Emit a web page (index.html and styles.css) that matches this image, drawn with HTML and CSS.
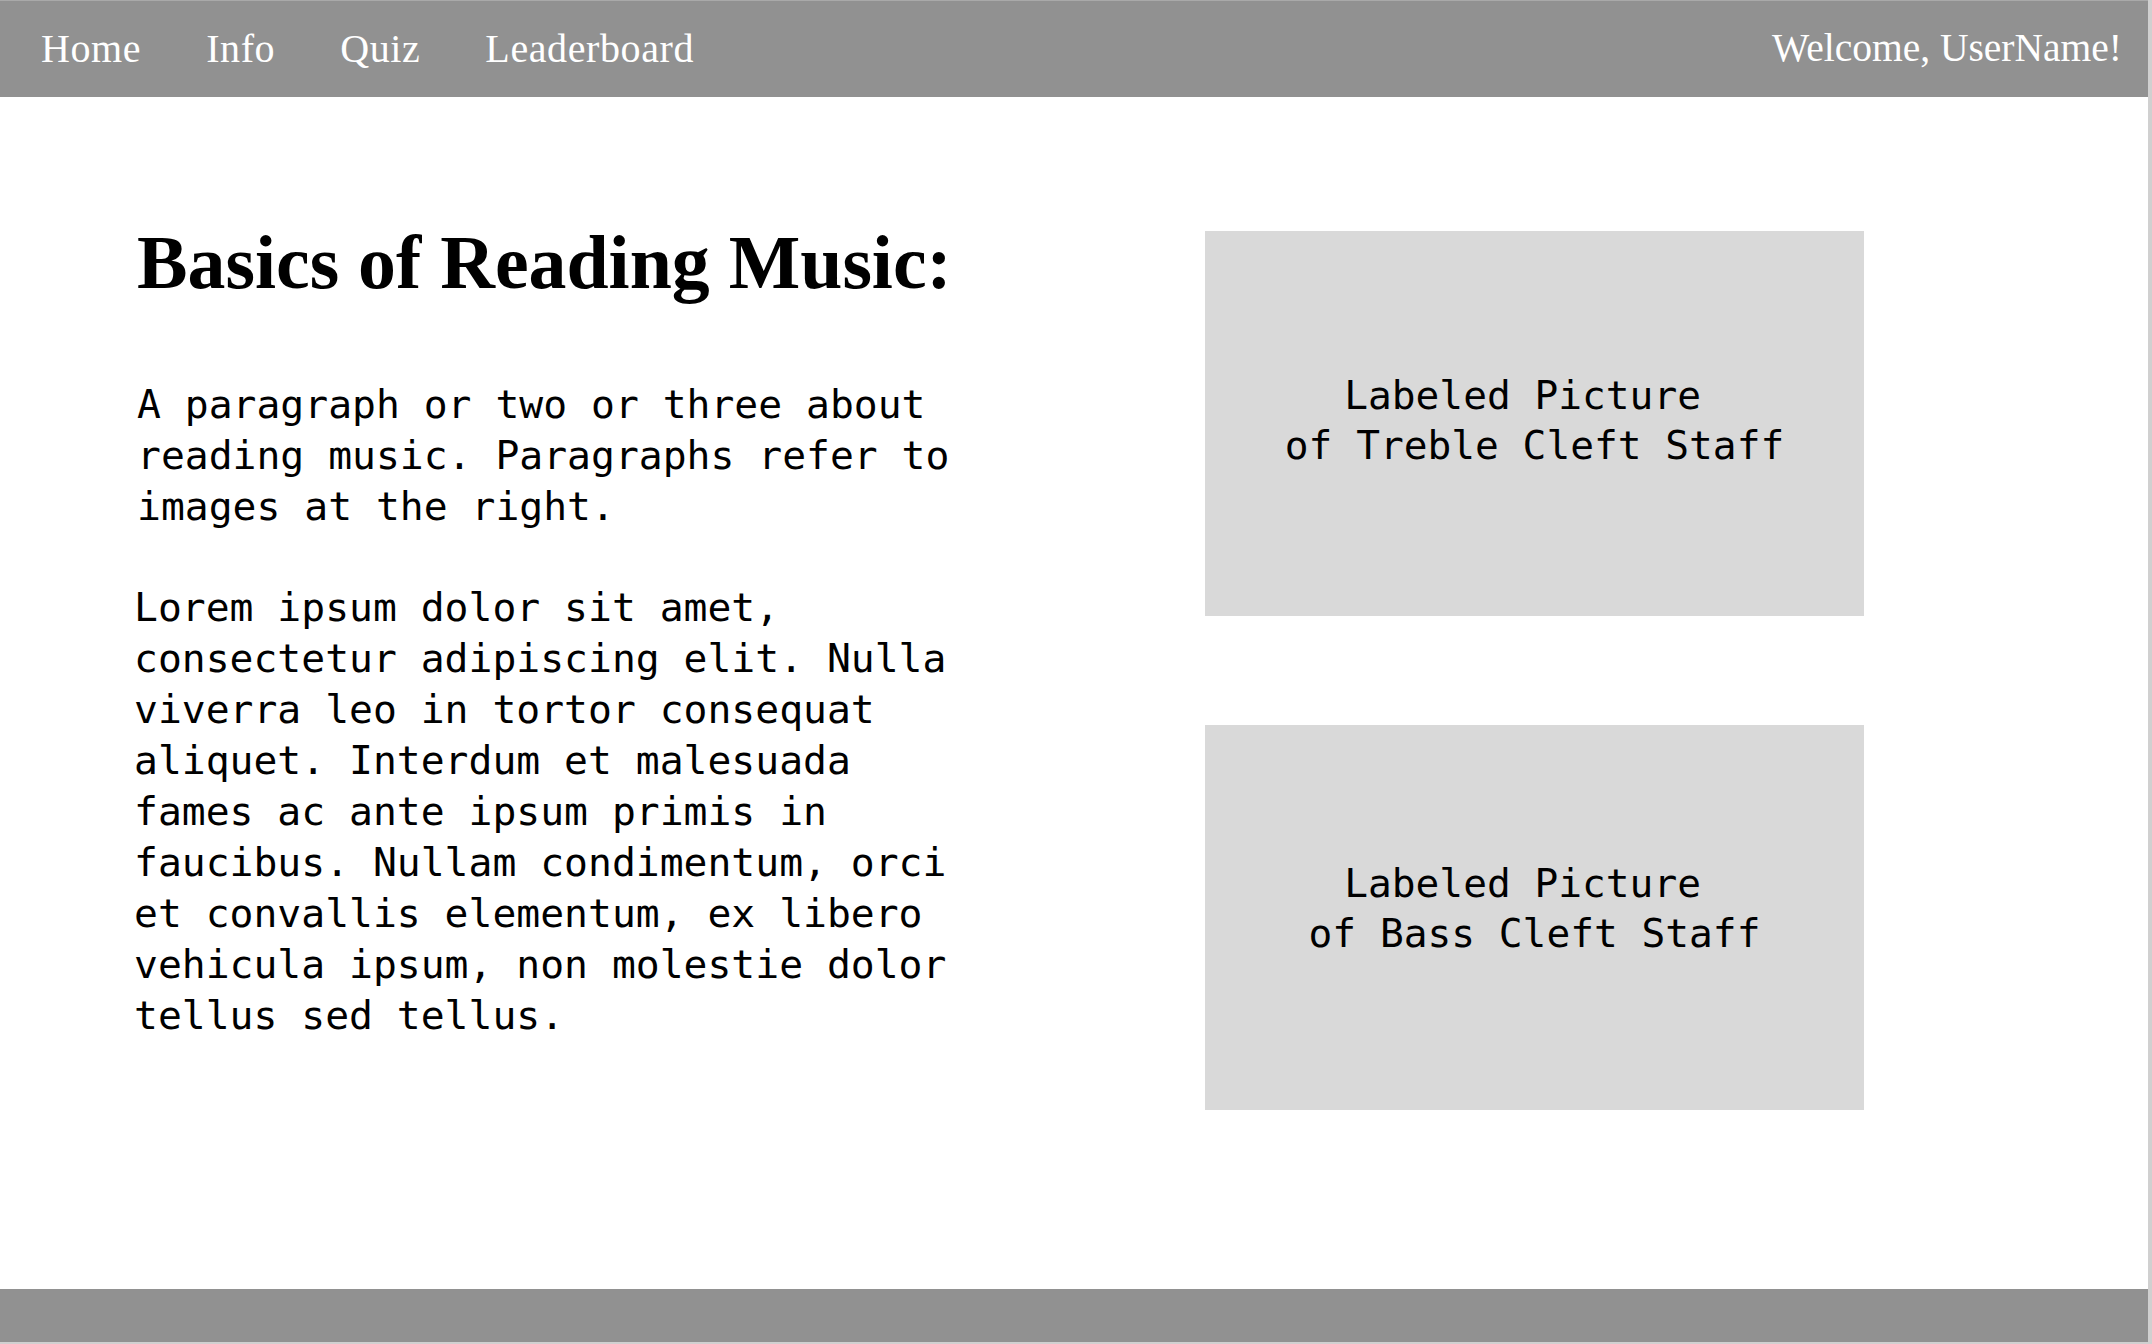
FILE: index.html
```html
<!DOCTYPE html>
<html lang="en">
<head>
<meta charset="utf-8">
<title>Basics of Reading Music</title>
<link rel="stylesheet" href="styles.css">
</head>
<body>
<div class="page">
  <nav class="topnav">
    <div class="nav-links">
      <a class="nav-link" href="#">Home</a>
      <a class="nav-link" href="#">Info</a>
      <a class="nav-link" href="#">Quiz</a>
      <a class="nav-link" href="#">Leaderboard</a>
    </div>
    <div class="welcome">Welcome, UserName!</div>
  </nav>
  <main class="content">
    <section class="text-col">
      <h1 class="title">Basics of Reading Music:</h1>
      <p class="para">A paragraph or two or three about reading music. Paragraphs refer to images at the right.</p>
      <p class="para para-lorem">Lorem ipsum dolor sit amet, consectetur adipiscing elit. Nulla viverra leo in tortor consequat aliquet. Interdum et malesuada fames ac ante ipsum primis in faucibus. Nullam condimentum, orci et convallis elementum, ex libero vehicula ipsum, non molestie dolor tellus sed tellus.</p>
    </section>
    <section class="pic-col">
      <div class="pic pic-treble"><span class="pic-label">Labeled Picture 
of Treble Cleft Staff</span></div>
      <div class="pic pic-bass"><span class="pic-label">Labeled Picture 
of Bass Cleft Staff</span></div>
    </section>
  </main>
  <footer class="footer"></footer>
</div>
</body>
</html>
```

FILE: styles.css
```css
html, body {
  margin: 0;
  padding: 0;
}
body {
  background: #d0d0d0;
  height: 1344px;
  overflow: hidden;
}
.page {
  box-sizing: border-box;
  margin: 0 4px 2px 0;
  height: 1342px;
  background: #ffffff;
  display: flex;
  flex-direction: column;
}
.topnav {
  box-sizing: border-box;
  height: 97px;
  border-top: 1px solid #a9a9a9;
  background: #919191;
  display: flex;
  align-items: center;
  justify-content: space-between;
  padding: 0 26px 2px 41px;
  font-family: "Liberation Serif", "Times New Roman", serif;
  font-size: 40px;
  color: #ffffff;
}
.nav-links {
  display: flex;
  gap: 65px;
  letter-spacing: 0.6px;
}
.nav-link {
  color: #ffffff;
  text-decoration: none;
}
.welcome {
  color: #ffffff;
  font-size: 39.5px;
}
.content {
  flex: 1;
  display: flex;
  padding-left: 137px;
  gap: 208px;
}
.text-col {
  width: 860px;
  padding-top: 128px;
}
.title {
  margin: 0;
  font-family: "Liberation Serif", "Times New Roman", serif;
  font-weight: 700;
  font-size: 75.8px;
  line-height: 1;
  color: #000000;
}
.para {
  margin: 78px 0 0 0;
  width: 35ch;
  font-family: "DejaVu Sans Mono", "Liberation Mono", monospace;
  font-size: 39.7px;
  line-height: 51px;
  color: #000000;
}
.para-lorem {
  margin-top: 50px;
  margin-left: -3px;
}
.pic-col {
  padding-top: 134px;
  display: flex;
  flex-direction: column;
  gap: 109px;
}
.pic {
  box-sizing: border-box;
  width: 659px;
  height: 385px;
  background: #d9d9d9;
  display: flex;
  align-items: center;
  justify-content: center;
}
.pic-treble {
  padding-bottom: 7px;
}
.pic-bass {
  padding-bottom: 20px;
}
.pic-label {
  white-space: pre;
  text-align: center;
  font-family: "DejaVu Sans Mono", "Liberation Mono", monospace;
  font-size: 39.5px;
  line-height: 50px;
  color: #000000;
}
.footer {
  height: 53px;
  background: #919191;
}
```
